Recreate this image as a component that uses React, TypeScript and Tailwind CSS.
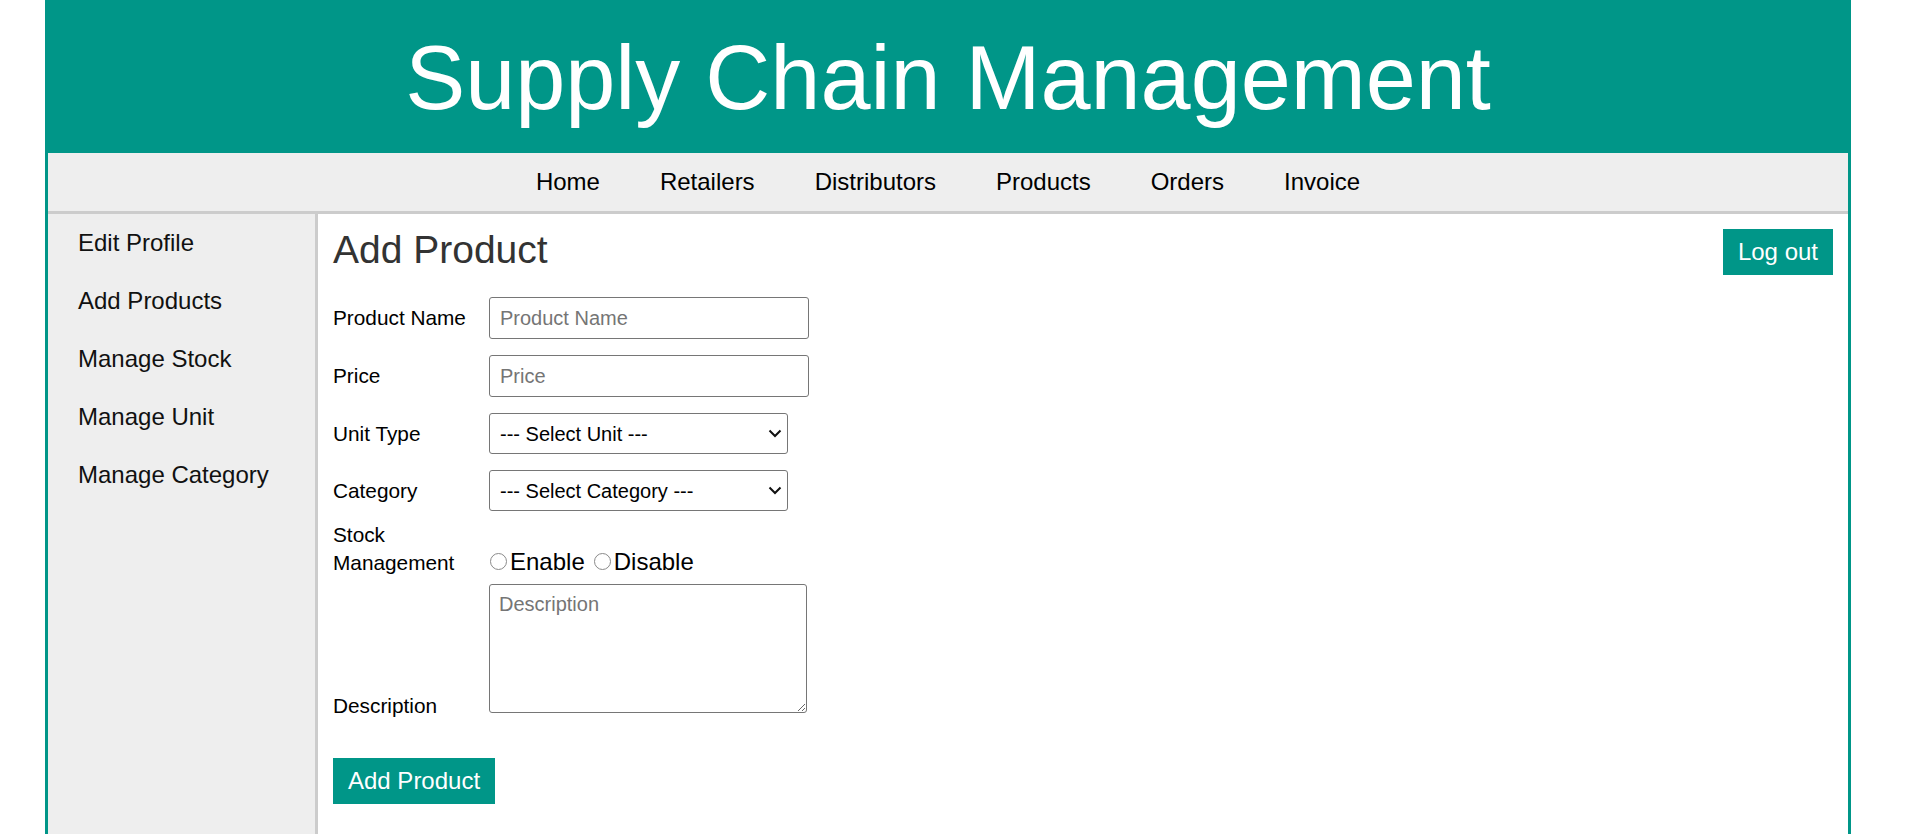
import React from "react";

const navLinks = ["Home", "Retailers", "Distributors", "Products", "Orders", "Invoice"];

const sideLinks = ["Edit Profile", "Add Products", "Manage Stock", "Manage Unit", "Manage Category"];

const Radio = ({ label, first }: { label: string; first?: boolean }) => (
  <span className={`flex items-baseline ${first ? "" : "ml-[9px]"}`}>
    <span className="inline-block h-[17px] w-[17px] rounded-full border border-[#8a8a8a] bg-white" />
    <span className="ml-[3px]">{label}</span>
  </span>
);

const Select = ({ text }: { text: string }) => (
  <div className="relative">
    <select className="h-[41px] w-[299px] appearance-none rounded-[3px] border border-[#767676] bg-white px-[10px] text-[20px]">
      <option>{text}</option>
    </select>
    <svg
      className="pointer-events-none absolute right-[6px] top-[16px]"
      width="14"
      height="9"
      viewBox="0 0 14 9"
      fill="none"
    >
      <path d="M1.5 1.5l5.5 5.5 5.5-5.5" stroke="#111" strokeWidth="2" />
    </svg>
  </div>
);

const App = () => {
  return (
    <div className="min-h-screen bg-white font-['Liberation_Sans',Arial,sans-serif] text-black">
      <div className="ml-[45px] w-[1806px] border-x-[3px] border-[#009688]">
        {/* Header */}
        <header className="flex h-[153px] items-center justify-center bg-[#009688] pt-[3px]">
          <h1 className="text-[90px] leading-none text-white">Supply Chain Management</h1>
        </header>

        {/* Top navigation */}
        <nav className="flex h-[61px] items-center justify-center gap-[60px] border-b-[3px] border-[#cccccc] bg-[#eeeeee] text-[24px]">
          {navLinks.map((link) => (
            <a key={link} href="#" className="text-black">
              {link}
            </a>
          ))}
        </nav>

        <div className="flex min-h-[756px]">
          {/* Sidebar */}
          <aside className="w-[270px] shrink-0 border-r-[3px] border-[#cccccc] bg-[#eeeeee]">
            {sideLinks.map((link) => (
              <a key={link} href="#" className="block py-[15px] pl-[30px] text-[24px] leading-[28px] text-[#111]">
                {link}
              </a>
            ))}
          </aside>

          {/* Main */}
          <main className="flex-1 p-[15px]">
            <div className="flex items-start justify-between">
              <h2 className="text-[39px] leading-[41px] text-[#333]">Add Product</h2>
              <button className="bg-[#009688] px-[15px] py-[9px] text-[24px] leading-[28px] text-white">Log out</button>
            </div>

            <form className="mt-[22px]">
              <div className="flex items-center">
                <label className="w-[156px] text-[20.8px]">Product Name</label>
                <input
                  placeholder="Product Name"
                  className="h-[42px] w-[320px] rounded-[3px] border border-[#767676] px-[10px] text-[20px] placeholder:text-[#757575]"
                />
              </div>

              <div className="mt-4 flex items-center">
                <label className="w-[156px] text-[20.8px]">Price</label>
                <input
                  placeholder="Price"
                  className="h-[42px] w-[320px] rounded-[3px] border border-[#767676] px-[10px] text-[20px] placeholder:text-[#757575]"
                />
              </div>

              <div className="mt-4 flex items-center">
                <label className="w-[156px] text-[20.8px]">Unit Type</label>
                <Select text="--- Select Unit ---" />
              </div>

              <div className="mt-4 flex items-center">
                <label className="w-[156px] text-[20.8px]">Category</label>
                <Select text="--- Select Category ---" />
              </div>

              <div className="mt-[10px] flex items-end">
                <label className="w-[157px] text-[20.8px] leading-[28px]">
                  Stock
                  <br />
                  Management
                </label>
                <div className="flex items-baseline pb-[1px] text-[24px] leading-[28px]">
                  <Radio label="Enable" first />
                  <Radio label="Disable" />
                </div>
              </div>

              <div className="mt-[7px] flex items-end">
                <label className="-mb-[7px] w-[156px] text-[20.8px] leading-[28px]">Description</label>
                <textarea
                  placeholder="Description"
                  className="h-[129px] w-[318px] rounded-[3px] border border-[#767676] px-[9px] pt-[4px] text-[20px] placeholder:text-[#757575]"
                />
              </div>

              <button
                type="button"
                className="mt-[45px] bg-[#009688] px-[15px] py-[9px] text-[24px] leading-[28px] text-white"
              >
                Add Product
              </button>
            </form>
          </main>
        </div>
      </div>
    </div>
  );
};

export default App;
